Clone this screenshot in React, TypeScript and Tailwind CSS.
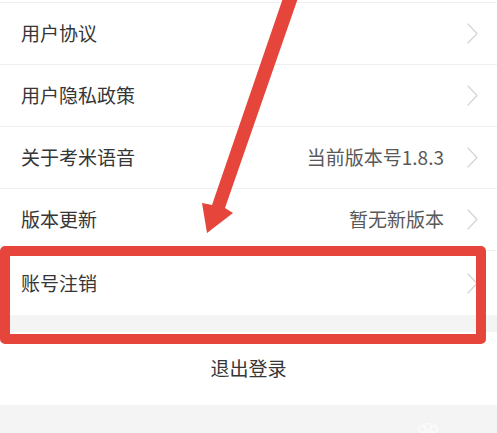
import React from "react";

const Chevron = () => (
  <svg width="11" height="21" viewBox="0 0 11 21" className="shrink-0">
    <path d="M1 1 L10 10.5 L1 20" fill="none" stroke="#d4d4d4" strokeWidth="1.2" strokeLinecap="round" strokeLinejoin="round" />
  </svg>
);

const Row = ({ label, value, h = "h-[62px]", border = true }: { label: string; value?: string; h?: string; border?: boolean }) => (
  <div className={`flex items-center ${h} pl-[21px] pr-[19px] bg-white ${border ? "border-b border-[#efefef]" : ""}`}>
    <span className="text-[19px] text-[#363636] flex-1">{label}</span>
    {value && <span className="text-[19px] text-[#595959] mr-[23px]">{value}</span>}
    {!value && <span className="mr-[23px]" />}
    <Chevron />
  </div>
);

export default function App() {
  return (
    <div
      className="relative w-[497px] h-[433px] overflow-hidden bg-white"
      style={{ fontFamily: '"Noto Sans CJK SC", "Noto Sans", sans-serif' }}
    >
      <div className="h-[2px] bg-white" />
      <div className="h-px bg-[#efefef]" />
      <Row label="用户协议" />
      <Row label="用户隐私政策" />
      <Row label="关于考米语音" value="当前版本号1.8.3" />
      <Row label="版本更新" value="暂无新版本" />
      <Row label="账号注销" h="h-[64px]" border={false} />
      <div className="h-[17px] bg-[#f4f4f4]" />
      <div className="h-[73px] bg-white flex items-center justify-center">
        <span className="text-[19px] text-[#363636]">退出登录</span>
      </div>
      <div className="h-[40px] bg-[#f4f4f4] relative">
        <svg className="absolute left-[414px] top-[18px]" width="30" height="14" viewBox="0 0 30 14">
          <ellipse cx="8" cy="6" rx="3" ry="3.5" fill="none" stroke="#fbfbfb" strokeWidth="1.3" />
          <ellipse cx="14" cy="3.5" rx="3" ry="3.5" fill="none" stroke="#fbfbfb" strokeWidth="1.3" />
          <ellipse cx="20" cy="6" rx="3" ry="3.5" fill="none" stroke="#fbfbfb" strokeWidth="1.3" />
          <ellipse cx="14" cy="13" rx="6" ry="4" fill="none" stroke="#fbfbfb" strokeWidth="1.3" />
        </svg>
      </div>

      {/* red highlight box */}
      <div className="absolute left-0 top-[246px] w-[486px] h-[98px] border-[10px] border-[#e6453b] rounded-[5px]" />

      {/* red arrow */}
      <svg className="absolute left-0 top-0 pointer-events-none" width="497" height="433" viewBox="0 0 497 433">
        <polygon
          points="283,-2 298,-2 225,208 233,213 207,233 202,203 212,205"
          fill="#e6453b"
        />
      </svg>
    </div>
  );
}
